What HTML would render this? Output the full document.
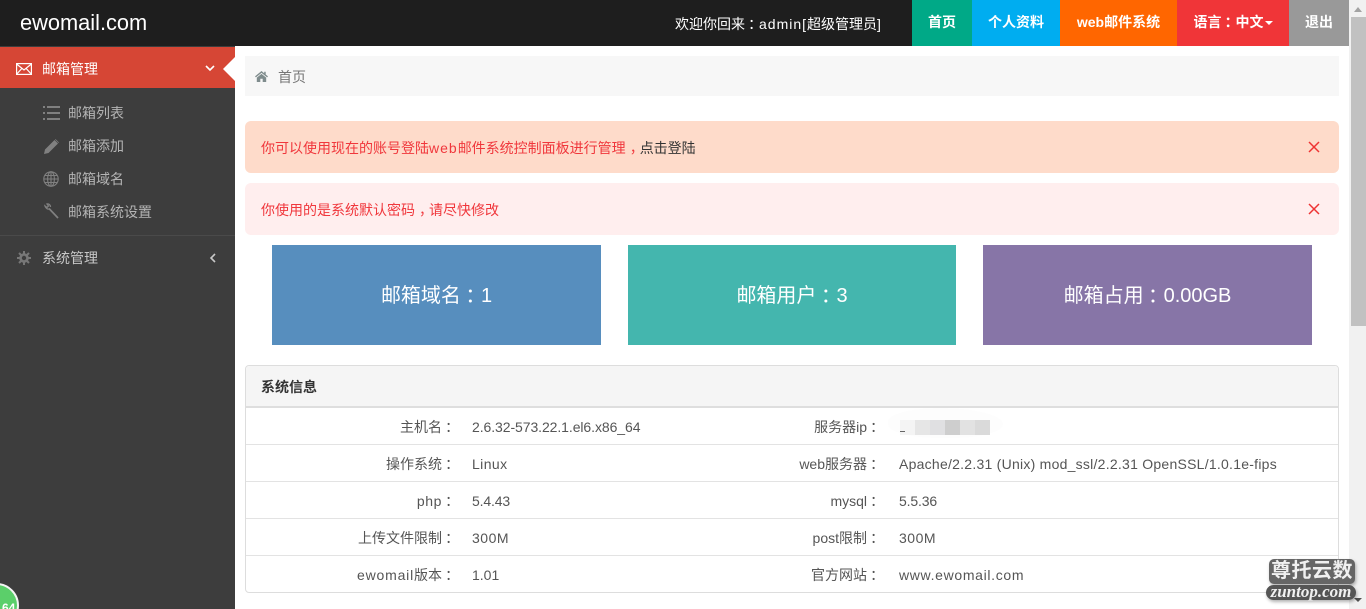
<!DOCTYPE html>
<html lang="zh-CN">
<head>
<meta charset="utf-8">
<title>ewomail.com</title>
<style>
html,body{margin:0;padding:0;width:1366px;height:609px;overflow:hidden;background:#fff}
body{position:relative;font-family:"Liberation Sans","Noto Sans CJK SC",sans-serif;font-size:14px;color:#555}
div,span,a{position:absolute;white-space:nowrap}
svg{position:absolute;display:block}
b.c{position:relative;left:.22em;font-weight:inherit}
b.m{font-weight:inherit}
.t{line-height:20px}
.nav{top:0;height:46px;line-height:44px;color:#fff;font-weight:bold;font-size:14px;text-align:center}
.side{color:#b4b4b4;left:68px;line-height:20px}
.box{top:245px;height:100px;line-height:102px;text-align:center;color:#fff;font-size:20px}
.al{left:245px;width:1094px;border-radius:6px}
.r{height:1px;left:246px;width:1092px;background:#e3e3e3}
.k{width:210px;left:246px;text-align:right;line-height:20px;color:#555}
.k2{width:208px;left:673px;text-align:right;line-height:20px;color:#555}
.v{left:472px;line-height:20px;color:#555}
.v2{left:899px;line-height:20px;color:#555}
</style>
</head>
<body>
<!-- Top bar -->
<div style="left:0;top:0;width:1366px;height:46px;background:#1e1e1e"></div>
<div style="left:20px;top:10px;line-height:26px;font-size:21.8px;color:#fff">ewomail.com</div>
<div class="t" style="left:675px;top:14px;color:#fff">欢迎你回来<b class="c">：</b><b class="m" style="letter-spacing:1px">admin[</b>超级管理员<b class="m" style="letter-spacing:1px">]</b></div>
<div class="nav" style="left:912px;width:60px;background:#00a987">首页</div>
<div class="nav" style="left:972px;width:88px;background:#00adf0">个人资料</div>
<div class="nav" style="left:1060px;width:117px;background:#ff6600">web邮件系统</div>
<div class="nav" style="left:1177px;width:112px;background:#f03538">语言<b class="c">：</b>中文<span style="position:static;display:inline-block;width:0;height:0;border-left:4px solid transparent;border-right:4px solid transparent;border-top:4px solid #fff;vertical-align:middle;margin-left:1px"></span></div>
<div class="nav" style="left:1289px;width:60px;background:#999">退出</div>

<!-- Sidebar -->
<div style="left:0;top:46px;width:235px;height:563px;background:#3d3d3d"></div>
<div style="left:0;top:47px;width:235px;height:41px;background:#d64635"></div>
<div style="left:223px;top:57px;width:0;height:0;border-top:12px solid transparent;border-bottom:12px solid transparent;border-right:12px solid #fff"></div>
<svg style="left:16px;top:63px" width="16" height="12" viewBox="0 0 16 12" fill="none" stroke="#fff" stroke-width="1.2"><rect x=".6" y=".6" width="14.8" height="10.8"/><path d="M.6 1l7.4 6 7.4-6M.8 11l5-5.5M15.2 11l-5-5.500"/></svg>
<div class="t" style="left:42px;top:59px;color:#fff">邮箱管理</div>
<svg style="left:205px;top:65px" width="10" height="7" viewBox="0 0 10 7" fill="none" stroke="#fff" stroke-width="1.6"><path d="M1 1l4 4 4-4"/></svg>

<svg style="left:43px;top:106px" width="17" height="15" viewBox="0 0 17 15" fill="#808080"><path d="M0 0h2v2H0zM4 0h13v2H4zM0 6h2v2H0zM4 6h13v2H4zM0 12h2v2H0zM4 12h13v2H4z"/></svg>
<div class="side" style="top:103px">邮箱列表</div>
<svg style="left:44px;top:139px" width="15" height="15" viewBox="0 0 15 15" fill="#808080"><path d="M0 15l1-4.500L10.500 1l3.500 3.500L4.500 14zM11.500 0l3.500 3.500-.5.500L11 .5z"/></svg>
<div class="side" style="top:136px">邮箱添加</div>
<svg style="left:43px;top:171px" width="16" height="16" viewBox="0 0 16 16" fill="none" stroke="#808080" stroke-width="1.1"><circle cx="8" cy="8" r="7.2"/><ellipse cx="8" cy="8" rx="3.400" ry="7.2"/><path d="M8 .8v14.400M.8 8h14.400M1.800 4.500h12.400M1.800 11.500h12.400"/></svg>
<div class="side" style="top:169px">邮箱域名</div>
<svg style="left:44px;top:203px" width="15" height="16" viewBox="0 0 15 16" fill="none" stroke="#808080"><path d="M14 15L5 5.500" stroke-width="1.700"/><path d="M5.500 6C3.500 6.500 1.500 5 1 3l2 1.500L4.500 3 3 1C5 .5 6.500 2 6.500 4" stroke-width="1.300"/></svg>
<div class="side" style="top:202px">邮箱系统设置</div>

<div style="left:0;top:235px;width:235px;height:1px;background:#4a4a4a"></div>
<svg style="left:17px;top:251px" width="14" height="14" viewBox="0 0 14 14" fill="none" stroke="#777"><circle cx="7" cy="7" r="3.500" stroke-width="2.600"/><path d="M7 0v3M7 11v3M0 7h3M11 7h3M2 2l2 2M10 10l2 2M12 2l-2 2M4 10l-2 2" stroke-width="2"/></svg>
<div class="t" style="left:42px;top:248px;color:#c8c8c8">系统管理</div>
<svg style="left:209px;top:253px" width="7" height="10" viewBox="0 0 7 10" fill="none" stroke="#c8c8c8" stroke-width="1.600"><path d="M6 1L2 5l4 4"/></svg>

<!-- green badge -->
<div style="left:-26px;top:583px;width:41px;height:41px;border-radius:50%;background:#5bcf6a;border:2px solid #f4f4f4;overflow:hidden"><span style="left:26px;top:16px;color:#fff;font-size:12px;font-weight:bold;line-height:14px">64</span></div>

<!-- Breadcrumb -->
<div style="left:245px;top:56px;width:1094px;height:40px;background:#f7f7f7"></div>
<svg style="left:255px;top:71px" width="13" height="11" viewBox="0 0 13 11" fill="#7f8c8d"><path d="M6.500 0L0 5.400l.9 1L6.500 1.900l5.600 4.500.9-1-2.300-1.900V.8H9.200v1.500z"/><path d="M1.800 6.600L6.500 2.900l4.700 3.700V11H7.700V7.700H5.300V11H1.800z"/></svg>
<div class="t" style="left:278px;top:67px;color:#777">首页</div>

<!-- Alerts -->
<div class="al" style="top:121px;height:52px;background:#fedbca"></div>
<div class="t" style="left:261px;top:138px;color:#f0373c">你可以使用现在的账号登陆<b class="m" style="letter-spacing:1px">web</b>邮件系统控制面板进行管理<b class="c" style="left:4px">，</b><b class="m" style="color:#333">点击登陆</b></div>
<svg style="left:1308px;top:141px" width="12" height="12" viewBox="0 0 12 12" fill="none" stroke="#ee3333" stroke-width="1.500"><path d="M1 1l10 10M11 1L1 11"/></svg>
<div class="al" style="top:183px;height:52px;background:#ffeeee"></div>
<div class="t" style="left:261px;top:200px;color:#f0373c">你使用的是系统默认密码<b class="c" style="left:4px">，</b>请尽快修改</div>
<svg style="left:1308px;top:203px" width="12" height="12" viewBox="0 0 12 12" fill="none" stroke="#ee3333" stroke-width="1.500"><path d="M1 1l10 10M11 1L1 11"/></svg>

<!-- Stat boxes -->
<div class="box" style="left:272px;width:329px;background:#578ebe">邮箱域名<b class="c">：</b>1</div>
<div class="box" style="left:628px;width:328px;background:#44b6ae">邮箱用户<b class="c">：</b>3</div>
<div class="box" style="left:983px;width:329px;background:#8775a7">邮箱占用<b class="c">：</b>0.00GB</div>

<!-- Panel -->
<div style="left:245px;top:365px;width:1092px;height:226px;border:1px solid #ddd;border-radius:4px"></div>
<div style="left:246px;top:366px;width:1092px;height:40px;background:#f5f5f5;border-radius:4px 4px 0 0"></div>
<div style="left:246px;top:406px;width:1092px;height:2px;background:#dedede"></div>
<div class="t" style="left:261px;top:377px;font-size:14px;font-weight:bold;color:#333">系统信息</div>

<div class="r" style="top:444px"></div>
<div class="r" style="top:481px"></div>
<div class="r" style="top:518px"></div>
<div class="r" style="top:555px"></div>

<div class="k" style="top:417px">主机名<b class="c">：</b></div>
<div class="v" style="top:417px;letter-spacing:-.08px">2.6.32-573.22.1.el6.x86_64</div>
<div class="k2" style="top:417px"><b class="m" style="letter-spacing:0">服务器ip</b><b class="c">：</b></div>
<div style="left:888px;top:408px;width:115px;height:30px;background:#fdfdfd;border-radius:50% 60% 50% 50%"></div>
<div style="left:900px;top:420px;width:15px;height:15px;background:#f4f4f4"></div>
<div style="left:915px;top:420px;width:15px;height:15px;background:#e6e6e6"></div>
<div style="left:930px;top:420px;width:15px;height:15px;background:#e0e0e2"></div>
<div style="left:945px;top:420px;width:15px;height:15px;background:#cecece"></div>
<div style="left:960px;top:420px;width:15px;height:15px;background:#e2e2e2"></div>
<div style="left:975px;top:420px;width:15px;height:15px;background:#dadada"></div>
<div style="left:900px;top:431px;width:5px;height:1px;background:#666"></div>

<div class="k" style="top:454px">操作系统<b class="c">：</b></div>
<div class="v" style="top:454px;letter-spacing:.4px">Linux</div>
<div class="k2" style="top:454px">web服务器<b class="c">：</b></div>
<div class="v2" style="top:454px;letter-spacing:.25px">Apache/2.2.31 (Unix) mod_ssl/2.2.31 OpenSSL/1.0.1e-fips</div>

<div class="k" style="top:491px"><b class="m" style="letter-spacing:.6px">php</b><b class="c">：</b></div>
<div class="v" style="top:491px;letter-spacing:-.15px">5.4.43</div>
<div class="k2" style="top:491px">mysql<b class="c">：</b></div>
<div class="v2" style="top:491px;letter-spacing:-.15px">5.5.36</div>

<div class="k" style="top:528px">上传文件限制<b class="c">：</b></div>
<div class="v" style="top:528px;letter-spacing:.5px">300M</div>
<div class="k2" style="top:528px">post限制<b class="c">：</b></div>
<div class="v2" style="top:528px;letter-spacing:.5px">300M</div>

<div class="k" style="top:565px"><b class="m" style="letter-spacing:.8px">ewomail</b>版本<b class="c">：</b></div>
<div class="v" style="top:565px">1.01</div>
<div class="k2" style="top:565px">官方网站<b class="c">：</b></div>
<div class="v2" style="top:565px;letter-spacing:.67px">www.ewomail.com</div>

<!-- Scrollbar -->
<div style="left:1349px;top:0;width:17px;height:609px;background:#f1f1f1"></div>
<div style="left:1351px;top:17px;width:15px;height:309px;background:#c1c1c1"></div>
<div style="left:1354px;top:7px;width:0;height:0;border-left:4px solid transparent;border-right:4px solid transparent;border-bottom:5px solid #a3a3a3"></div>
<div style="left:1354px;top:598px;width:0;height:0;border-left:4px solid transparent;border-right:4px solid transparent;border-top:4px solid #505050"></div>

<!-- Watermark -->
<div style="left:1269px;top:559px;width:86px;height:25px;background:#666;border-radius:5px;box-shadow:1px 2px 3px rgba(0,0,0,.3)"></div>
<div style="left:1269px;top:559px;width:86px;line-height:25px;font-size:20px;font-weight:bold;color:#f0f0f0;text-align:center;letter-spacing:.5px">尊托云数</div>
<div style="left:1266px;top:585px;width:90px;height:15px;background:#555;border-radius:8px;box-shadow:1px 2px 3px rgba(0,0,0,.3)"></div>
<div style="left:1266px;top:583px;width:90px;line-height:18px;font-size:17px;font-weight:bold;font-style:italic;font-family:'Liberation Serif',serif;color:#f0f0f0;text-align:center">zuntop.com</div>
</body>
</html>
